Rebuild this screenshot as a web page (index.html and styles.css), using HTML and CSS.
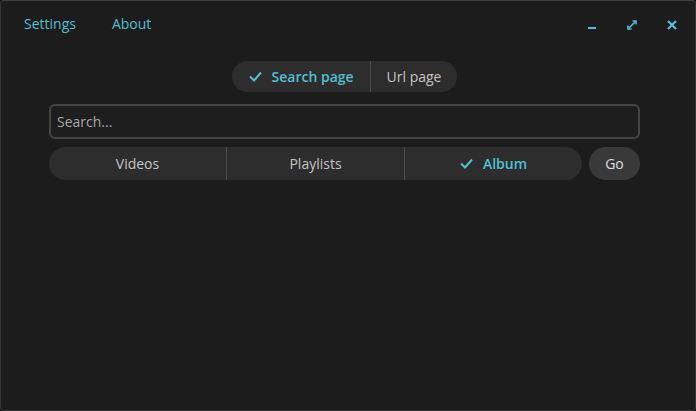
FILE: index.html
```html
<!DOCTYPE html>
<html>
<head>
<meta charset="utf-8">
<link rel="stylesheet" href="styles.css">
</head>
<body>
<div class="window">
  <header class="titlebar">
    <nav class="menu">
      <span class="menu-item">Settings</span>
      <span class="menu-item">About</span>
    </nav>
    <div class="controls">
      <span class="ctl">
        <svg width="10" height="10" viewBox="0 0 10 10"><rect x="1" y="7" width="8" height="2" fill="currentColor"/></svg>
      </span>
      <span class="ctl">
        <svg width="10" height="10" viewBox="0 0 10 10" fill="none" stroke="currentColor" stroke-width="1.6"><path d="M2 8 L8 2"/><path d="M1 5.5 V9 H4.5" /><path d="M5.5 1 H9 V4.5"/></svg>
      </span>
      <span class="ctl">
        <svg width="10" height="10" viewBox="0 0 10 10" fill="none" stroke="currentColor" stroke-width="2.2"><path d="M1 1 L9 9 M9 1 L1 9"/></svg>
      </span>
    </div>
  </header>
  <main class="content">
    <div class="mode-row">
      <div class="mode-toggle">
        <span class="seg active"><svg class="check" width="13" height="11" viewBox="0 0 13 11" fill="none" stroke="currentColor" stroke-width="2"><path d="M1 5.5 L5 9.5 L12 1.5"/></svg>Search page</span>
        <span class="seg">Url page</span>
      </div>
    </div>
    <div class="search-box">Search...</div>
    <div class="type-row">
      <div class="type-toggle">
        <span class="tseg">Videos</span>
        <span class="tseg">Playlists</span>
        <span class="tseg active"><svg class="check" width="13" height="11" viewBox="0 0 13 11" fill="none" stroke="currentColor" stroke-width="2"><path d="M1 5.5 L5 9.5 L12 1.5"/></svg>Album</span>
      </div>
      <button class="go">Go</button>
    </div>
  </main>
</div>
</body>
</html>
```

FILE: styles.css
```css
* { box-sizing: border-box; }
html, body {
  margin: 0;
  padding: 0;
  width: 696px;
  height: 411px;
  background: #0e0e0e;
  overflow: hidden;
}
body {
  font-family: "Open Sans", "Noto Sans", sans-serif;
  font-size: 14px;
  color: #c8c8c8;
}
.window {
  width: 696px;
  height: 411px;
  background: #1c1c1c;
  border: 1px solid #363636;
  border-top-color: #404040;
  border-radius: 4px;
  display: flex;
  flex-direction: column;
}
.titlebar {
  height: 46px;
  display: flex;
  align-items: flex-start;
  justify-content: space-between;
  padding-top: 13px;
}
.menu {
  display: flex;
  gap: 36px;
  padding-left: 23px;
}
.menu-item {
  color: #54bfd0;
  line-height: 20px;
}
.controls {
  display: flex;
  gap: 30px;
  padding-right: 18px;
  padding-top: 6px;
}
.ctl {
  width: 10px;
  height: 10px;
  color: #54bfd0;
  display: flex;
}
.content {
  padding: 14px 55px 0 48px;
  display: flex;
  flex-direction: column;
}
.mode-row {
  display: flex;
  justify-content: center;
}
.mode-toggle {
  display: flex;
  height: 31px;
  background: #2d2d2d;
  border-radius: 16px;
  overflow: hidden;
}
.seg {
  display: flex;
  align-items: center;
  padding: 0 16px;
  color: #c4c4c4;
}
.seg:first-child {
  padding-left: 17px;
}
.seg + .seg {
  border-left: 1px solid #4a4a4a;
}
.seg.active {
  color: #54bfd0;
  font-weight: 600;
}
.check {
  margin-right: 10px;
  color: #54bfd0;
}
.search-box {
  margin-top: 12px;
  height: 35px;
  border: 2px solid #454545;
  border-radius: 6px;
  background: #1e1e1e;
  color: #a8a8a8;
  padding: 0 6px;
  display: flex;
  align-items: center;
}
.type-row {
  margin-top: 8px;
  display: flex;
  gap: 7px;
  height: 33px;
}
.type-toggle {
  flex: 1;
  display: flex;
  background: #2d2d2d;
  border-radius: 17px;
  overflow: hidden;
}
.tseg {
  flex: 1;
  display: flex;
  align-items: center;
  justify-content: center;
  color: #c4c4c4;
}
.tseg + .tseg {
  border-left: 1px solid #4a4a4a;
}
.tseg.active {
  color: #54bfd0;
  font-weight: 600;
}
.go {
  width: 51px;
  height: 33px;
  border: none;
  border-radius: 17px;
  background: #393939;
  color: #dcdcdc;
  font-family: inherit;
  font-size: 14px;
  padding: 0;
}
```
